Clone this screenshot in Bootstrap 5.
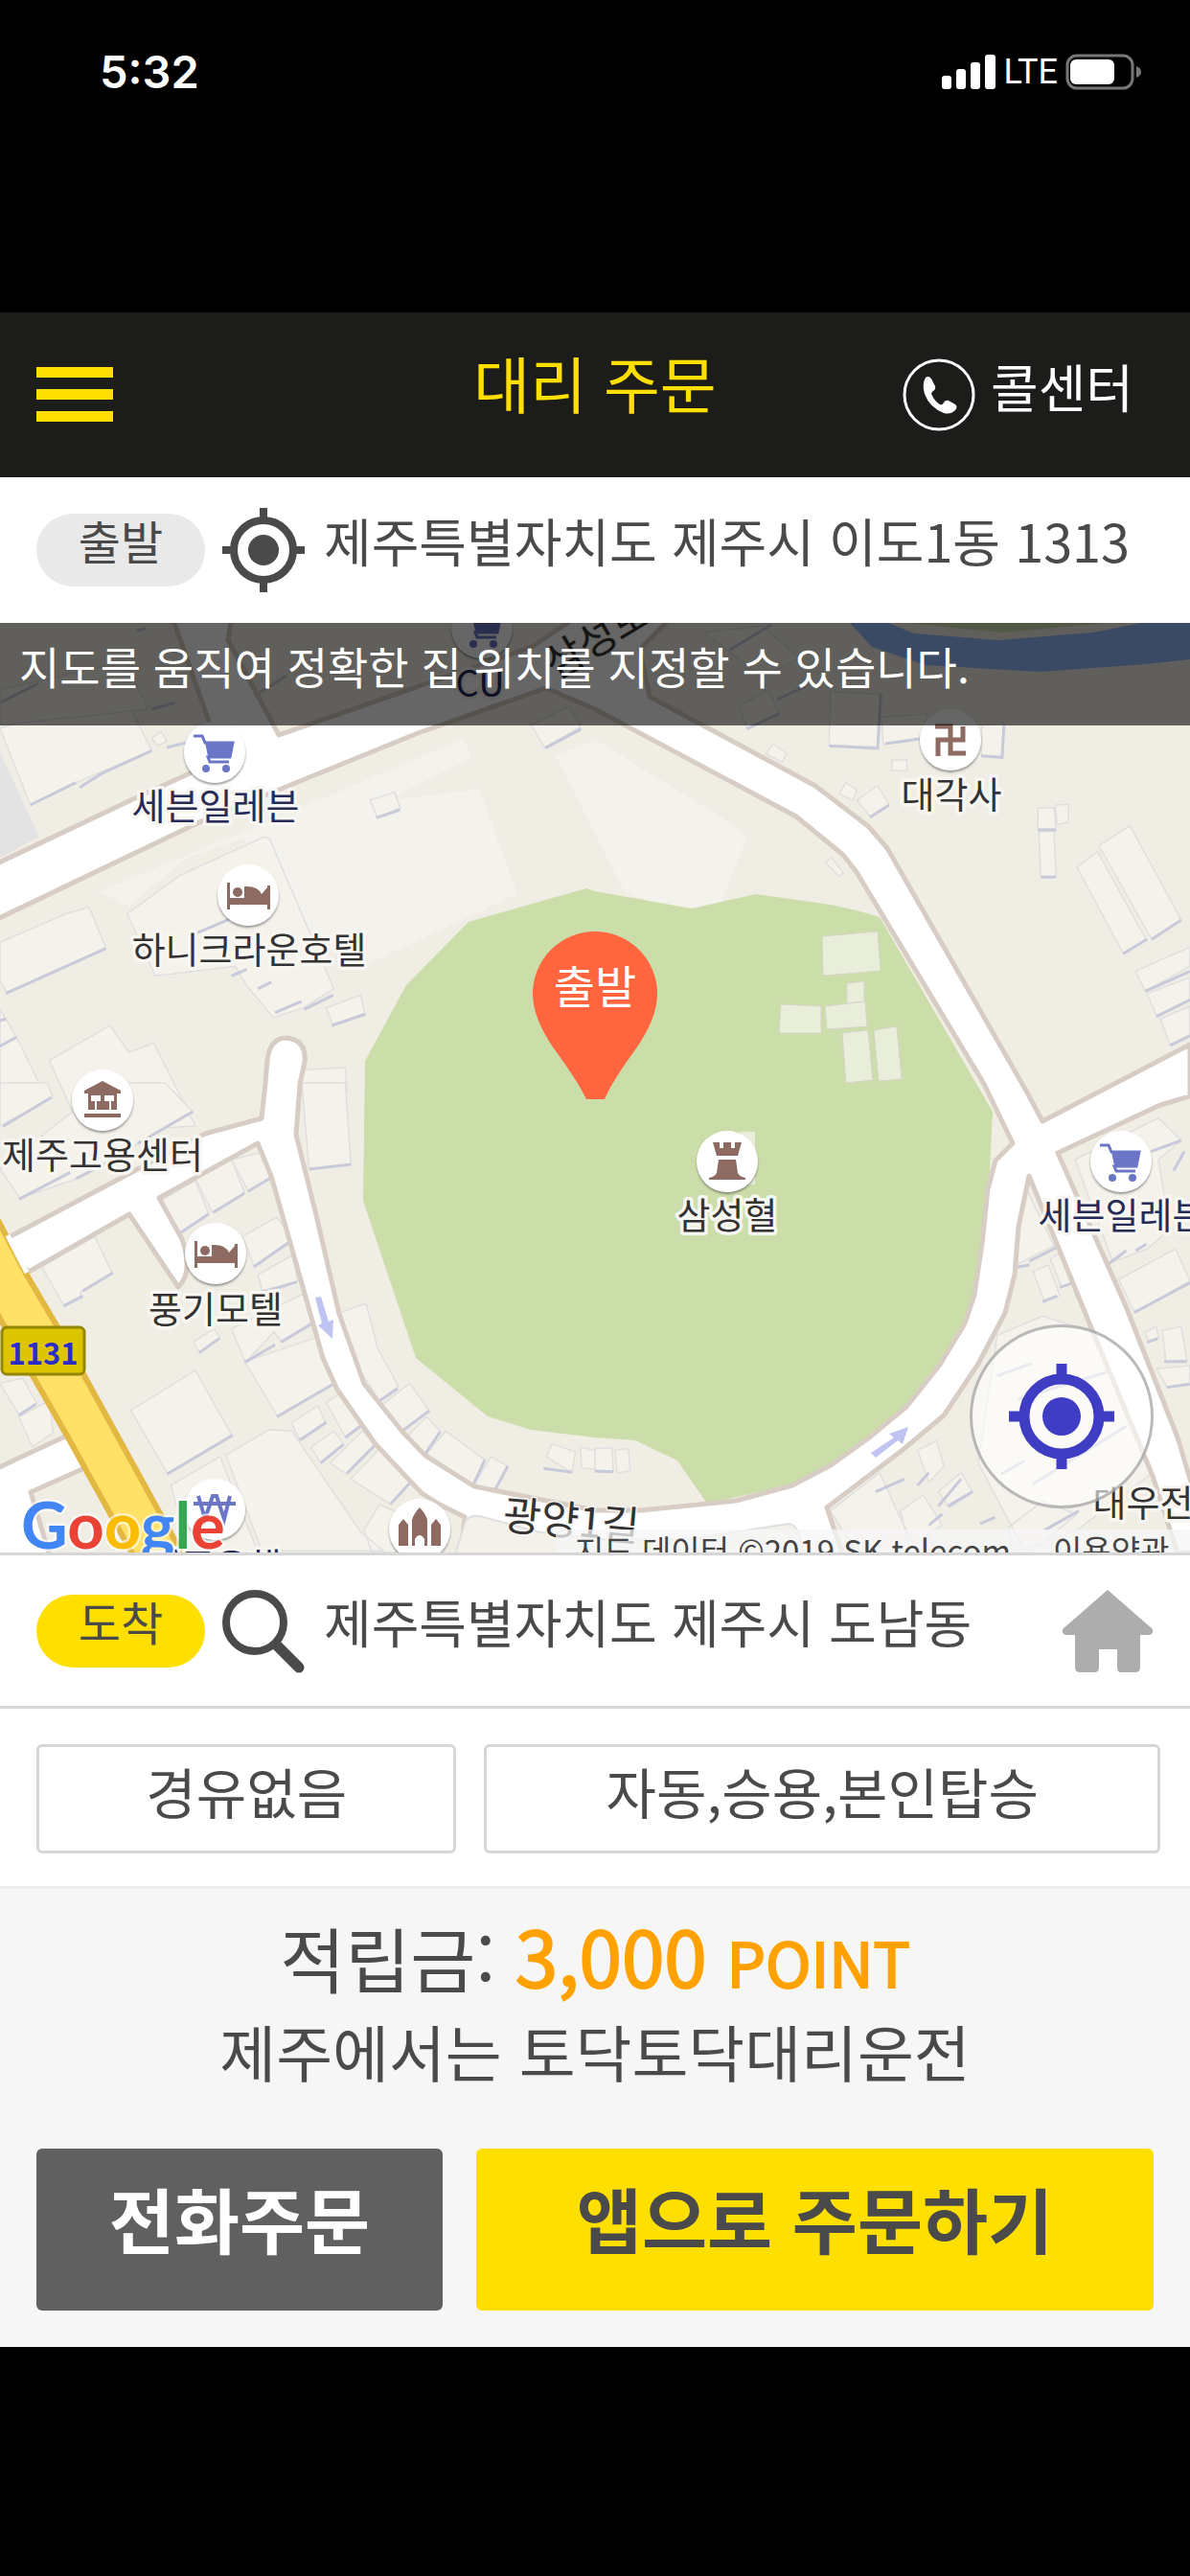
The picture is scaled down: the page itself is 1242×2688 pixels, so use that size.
<!DOCTYPE html>
<html lang="ko">
<head>
<meta charset="utf-8">
<meta name="viewport" content="width=device-width, initial-scale=1">
<title>대리 주문</title>
<link href="https://cdn.jsdelivr.net/npm/bootstrap@5.3.0/dist/css/bootstrap.min.css" rel="stylesheet">
<style>
body{background:#000;color:#4a4a4a;font-family:"Noto Sans CJK KR",sans-serif;min-height:100vh}
button{font-family:inherit}
.status-bar{height:326px;padding:45px 50px 0 104px;font-family:Inter,sans-serif}
.clock{font-size:47px;line-height:60px;font-weight:600}
.net{font-family:Roboto,sans-serif;font-size:36px;line-height:60px}
.app-head{height:172px;background:#1c1c1a;display:grid;grid-template-columns:1fr auto 1fr;align-items:center;padding:0 38px}
.app-title{font-size:64px;line-height:80px;color:#ffdf00;padding-bottom:28px;font-weight:400}
.call-link{margin-right:21px}
.call-txt{font-size:54px;line-height:72px;padding-bottom:18px}
.addr-row{height:152px;padding:0 38px}
.addr-end{height:163px;border-top:3px solid #d6d6d6;border-bottom:3px solid #d6d6d6}
.tag{width:176px;height:76px;border-radius:38px;font-size:48px;line-height:54px;background:#e9e9e9;text-align:center;margin-right:18px}
.tag-end{background:#ffdf00}
.addr{font-size:54px;line-height:72px;padding-bottom:20px;margin-left:20px;white-space:nowrap}
.map-tip{height:107px;background:rgba(0,0,0,.6);color:#fff;font-size:46px;line-height:88px;padding-left:20px;white-space:nowrap}
.locate{right:38px;bottom:46px;width:192px;height:192px;border:3px solid rgba(130,130,130,.55);background:rgba(255,255,255,.6)}
.opts{padding:37px 31px 34px 38px;gap:29px}
.opt{height:114px;border:3px solid #d6d6d6;border-radius:6px;background:#fff;color:#4a4a4a;font-size:57px;line-height:72px;padding:0 0 18px;min-width:0;white-space:nowrap}
.w-a{flex:437 1 0}.w-b{flex:707 1 0}.w-c{flex:424 1 0}
.pay{background:#f6f6f6;border-top:3px solid #ececec;padding:23px 38px 38px}
.sum{font-size:74px;line-height:96px}
.amt{font-size:80px;color:#ffa200;-webkit-text-stroke:2px #ffa200;line-height:90px}
.unit{font-size:64px;color:#ffa200;-webkit-text-stroke:2px #ffa200;line-height:90px}
.slogan{font-size:64px;line-height:96px}
.cta-row{gap:35px;margin-top:55px}
.cta{height:169px;border:0;border-radius:6px;font-size:74px;line-height:100px;font-weight:700;padding:0 0 26px;min-width:0;white-space:nowrap}
.cta-call{background:#606060;color:#fff}.cta-app{background:#ffdf00;color:#4a4a4a}
.poi{font-size:38px;fill:#333;stroke:#f8f6f1;stroke-width:7px;stroke-linejoin:round;paint-order:stroke;text-anchor:middle}
.shop{fill:#262b57}
.street{font-size:43px;text-anchor:start;stroke-width:3px}
.road{fill:#fff;stroke:#d7cdc4;stroke-width:5px;stroke-linejoin:round}
.bld path{fill:#f5f2eb;stroke:#e0dfdf;stroke-width:1.5px;vector-effect:non-scaling-stroke}
.bld .sh{fill:none;stroke:#c8c9d9;stroke-width:3px}
</style>
</head>
<body>
<div class="status-bar d-flex justify-content-between align-items-start text-white">
  <span class="clock">5:32</span>
  <div class="d-flex align-items-center gap-2">
    <svg width="57" height="36" fill="#fff"><rect y="22" width="10" height="14" rx="3"/><rect x="15" y="15" width="10" height="21" rx="3"/><rect x="30" y="8" width="10" height="28" rx="3"/><rect x="45" width="11" height="36" rx="3"/></svg>
    <span class="net">LTE</span>
    <svg width="80" height="38"><rect x="2" y="2" width="68" height="34" rx="10" fill="none" stroke="#777" stroke-width="3"/><rect x="5" y="6" width="46" height="26" rx="6" fill="#fff"/><path d="M74 13q5 2 5 6t-5 6z" fill="#777"/></svg>
  </div>
</div>

<header class="app-head text-white">
  <button class="btn p-0 border-0 text-start lh-1" aria-label="메뉴"><svg width="80" height="58" fill="#ffdf00"><rect width="80" height="11"/><rect y="23" width="80" height="11"/><rect y="46" width="80" height="11"/></svg></button>
  <h1 class="app-title m-0">대리 주문</h1>
  <a href="#call" class="call-link d-flex align-items-center justify-content-end text-white text-decoration-none">
    <svg width="76" height="76" viewBox="0 0 76 76"><circle cx="38" cy="38" r="36" fill="none" stroke="#fff" stroke-width="3"/><path d="M24 20q4-3 7 3l3 6q1 3-2 5-3 2-1 5 3 6 8 9 3 1 4-2 2-3 5-2l7 4q3 2 0 6-5 5-12 3-15-6-20-20-3-10 1-17z" fill="#fff"/></svg>
    <span class="call-txt ms-3">콜센터</span>
  </a>
</header>

<main class="bg-white">
  <section class="addr-row d-flex align-items-center">
    <span class="tag">출발</span>
    <svg width="86" height="88" viewBox="0 0 86 88"><circle cx="43" cy="44" r="31" fill="none" stroke="#4a4a4a" stroke-width="8"/><circle cx="43" cy="44" r="16" fill="#4a4a4a"/><path d="M43 0v12M43 76v12M0 44h11M75 44h11" stroke="#4a4a4a" stroke-width="8"/></svg>
    <span class="addr">제주특별자치도 제주시 이도1동 1313</span>
  </section>

  <section class="position-relative overflow-hidden">
    <svg class="d-block w-100" viewBox="0 0 1242 970" role="img" aria-label="지도">
      <defs>
        <filter id="pinShade" x="-20%" y="-20%" width="140%" height="150%"><feDropShadow dx="0" dy="2" stdDeviation="1" flood-color="#555" flood-opacity=".6"/></filter>
        <g id="disc"><circle r="32" fill="#fff" filter="url(#pinShade)"/></g>
        <g id="cart"><use href="#disc"/><path d="M-22-17h9l3 7h29l-3 15h-23l2 5h20" fill="none" stroke="#6b76c6" stroke-width="3"/><path d="M-10-10h29l-4 14h-22z" fill="#6b76c6"/><circle cx="-9" cy="17" r="4" fill="#6b76c6"/><circle cx="12" cy="17" r="4" fill="#6b76c6"/></g>
        <g id="bed" fill="#8d6b63"><use href="#disc"/><path d="M-22-13h3v16h39v-13h3v25h-3v-5h-39v5h-3z"/><circle cx="-11" cy="-3" r="5"/><path d="M-4 3v-12q14-1 18 8l6-7v11z"/></g>
      </defs>
      <rect width="1242" height="970" fill="#f0ede5"/>
      <path fill="#93b9fa" d="M887 0l23 25 56 19 119 7 112-8 45-5V0h-50l-52 10-98 8-88-7-27-11z"/>
      <path fill="#cbdda8" d="M946 0l100 10L1156 0z"/>
      <path fill="#e3e3e3" d="M0 135l41 88-41 22z"/>
      <g fill="#f4f2ec"><path d="M103 281l381-160 8 20-90 45 98-13 40 110-155 72-90-30-40-100-60 20-60 50z"/><path d="M621 122l124 76 35 24-32 82-27 5-70-30-71-141z"/></g>

      <!-- buildings, upper left quarter -->
      <g class="bld" transform="translate(0 -10) scale(.396 .3333)">
        <path d="M0 360l320-120 80 190-200 100-120 70zM400 390l25-20 15 30-25 15zM975 585l65-25 15 50-60 30zM335 940l140-120 220-120 15 5 170 470-80 60-80 30-70-100-30-60-210 30zM0 1030l175-90 60-20 45 130-260 140-20-40zM860 1235l90-40 12 60-85 35zM130 1400l160-110 50 85 65-30 110 260-300 20zM1400 350l100-60 30 65-95 65zM0 1240l45 90 70 170H0zM795 1430l115-8 5 78H795z"/>
        <path d="M0 350V240l330-90 60 150z"/>
        <path class="sh" d="M80 600l120-70M210 545l60-45 130-70M440 420l50-15M15 1190l263-140M500 1010l110-55M610 1135l40-20M725 1250l70-35M802 1240l76-45M680 1175l35-20M875 1290l88-35M992 640l62-25M1437 422l95-60M0 1275l15-5M0 1355l43-28M0 280l100-60M675 255l80-60M360 55l25-8M400 300l60-20"/>
      </g>
      <!-- upper right quarter -->
      <g class="bld" transform="translate(621 -10) scale(.396 .3333)">
        <path d="M620 245l135 8-10 165-128-5zM755 325l120-10-20 80-95 15zM380 290l75-50 30 70-85 50zM450 440l20-30 35 28-12 28zM645 565l15-35 30 22-10 33zM690 585l55-45 30 58-50 38zM782 460l40-2v35h-40zM1020 350l58-8-5 108-55-5zM1168 610l42-2 5 68h-48zM1213 600l35-2v55l-30 8zM1170 685l40-5 5 143-40 3zM608 780l15-15 32 48-13 10zM1270 795l55-48 128 275-60 45zM1328 727l82-62 135 295-78 60zM1425 1120l143-75v60l-118 78zM1455 1190l113-50v70l-88 50zM1490 1270l78-40v90l-52 32zM290 60l150-20 100 100-100 60z"/>
        <path class="sh" d="M617 415l128 8 8-170M765 408l90-15M725 638l50-38M1018 446l55 5 5-100M1167 678h48M1175 826h40M1393 1065l62-45M1468 1020l77-60M1450 1183l118-62M1480 1262l88-52M1516 1353l52-30M400 362l85-48M480 270l75-42M355 115l110-80"/>
      </g>
      <!-- lower left quarter -->
      <g class="bld" transform="translate(0 480) scale(.396 .3333)">
        <path d="M0 0h125l15 45-140 90zM320 0h115l73 90-145 100-160 110-150 60-53-90 180-170zM795 0h115l15 255-110 15zM415 375l100-70 35 105-85 70zM515 300l95-60 35 105-85 60zM610 240l90-25 25 75-70 50zM640 480l90-60 40 70-100 85zM680 600l90-60 15 80-90 50zM610 770l190-110 22 90-80 60-20-30-75 95zM110 575l140-95 45 115-80 55-5 20-40 30zM345 1025l170-125 97 205-170 120zM645 872l190-75 50 140-152 110zM0 940l60-15 38 80-48 35zM50 1045l80-50 10 100-55 45zM595 1165l115-80 60 5 50 90 130 225 60 60H690zM450 1260l130-90 100 300H500zM895 720l70-30 30 140 55 120-50 45-60-110zM1005 1010l75-70 50 85-68 65zM1070 1110l55-65 35 45-38 70zM1125 1160l50-70 103 90-33 80zM1250 1255l45-85 43 30-38 85zM768 1065l70-55 20 55-68 52zM860 1000l40-30 50 105-40 35zM820 1140l60-50 25 40-60 60zM870 1190l85-100 35 40-75 95zM925 1240l80-100 80 105-55 75zM510 810l55-40 15 30-55 45zM1440 1170l15-40 62 25-10 65zM1530 1140l38 10v60l-35-5zM960 1400l40-80 120 60-80 90h-60z"/>
        <path class="sh" d="M8 136l127-90M363 190l145-100M50 364l135-84M200 300l90-55M815 270l110-15M465 478l85-68M562 406l82-60M653 340l74-52M669 576l102-85M690 655l93-32M645 875l80-55M740 812l82-58M730 1045l153-105M440 1225l173-122M168 698l50-30M218 652l80-58M50 1040l45-35M1000 995l48-38M1062 1088l70-62M1122 1160l38-68M1245 1265l33-85M1300 1285l38-85M1030 1318l55-72M790 1118l70-55M845 1190l60-58M915 1222l75-90M910 1110l40-35M525 845l53-45M1433 1207l75 12"/>
      </g>
      <!-- lower right quarter -->
      <g class="bld" transform="translate(621 480) scale(.396 .3333)">
        <path d="M1265 240l220-130 60 70-60 60 30 220-60 60-90 40zM1380 615l150-95 38 100-145 100zM1110 350l30-10 70 170-110 65zM1155 590l40-20 30 95-40 20zM1200 550l25-15 30 90-25 15zM1450 780l30-18 5 40-25 10zM1495 775l50-12 15 105-55 5zM1480 895l88-10v60l-60 8zM1060 790l120-60 130 50 160 440-200 180-140 60-120-270zM850 1150l50-30 20 80-40 50zM905 1280l60-60 30 60-60 50zM805 1340l60-50 50 95-40 30 30 55H830zM1090 1390l90-80 90 40-120 120h-50zM0 1145l45-3 3 75H0zM53 1150l35-5 5 70-35 5zM620 1340l130-120 50 130 50 120H690z"/>
        <path class="sh" d="M1465 215l80-35M1525 275l28-60M1425 525l28-20M1350 570l50-45M1422 718l146-92M1180 685l38-18M1225 640l30-12M1145 558l75-45M1100 580l45-10M1455 812l28-12M1500 872h60M1508 953l60-10M1060 918l90-40M1115 990l235-85M1155 1255l245-180M1070 1225l60-40M740 1280l75-40M905 1325l60-85M880 1385l35-35M1015 1380l40-20M850 1260l30-40M1185 1400l90-60M0 1215l48 2M930 1325l65-45"/>
      </g>

      <path fill="#cbdda8" d="M612 277l-123 35-65 66-43 79-2 146 55 164 75 61 45 14 67 8 42 3 44 21 31 45 89-20 40-21 40-28 40-33 35-44 26-43 10-30 8-53 6-57 4-80-118-203-24-7-27-6-78-11-67 15-101-18z"/>
      <g fill="#e9eedb" stroke="#d8d3cb" stroke-width="1"><path d="M858 327l58-5 3 41-60 5z"/><path d="M884 376l18-2v21l-18 2z"/><path d="M861 400l42-5 2 26-42 3z"/><path d="M815 398l42 2v28h-44z"/><path d="M879 428l27-3 5 52-28 3z"/><path d="M912 425l24-4 5 55-24 2z"/></g>
      <path fill="#e9eedb" d="M772 531h16v55h-16z"/>

      <!-- roads -->
      <path class="road" d="M-5 252L143 182l55-25 32-20-48-137-10-8h70l-4 26 53 99 264-92 45-30h100l-27 27-5 7 10 48 173 93 55 42 20 23 146 255 16 30 154-80v54l-31 9-107 50 71 160 54 137 18 60v60h-18l-26-80-63-152-66-161-11 53-4 50-10 40-28 53-36 54-43 36-79 60 20 60H480l5-50-26-13-19-12-48-51-40-57-15-33-34-120-20-70-14-34-103 57 24 43q12 35-4 50l-51-76-105 60-32-30 121-64 95-50 59-16 4-37 2-24q3-23 20-23 21 2 19 25l-5 23-4 53 20 80 25 107 26 73 40 50 24 25 51 32 126 25 48 0 99-10 59-16 40-21 39-28 40-33 35-44 26-43 10-30 8-53 6-57 8-30 18-18-30-62L894 260l-14-18-49-40-210-112-51-22-134 47-226 92L-5 310z"/>
      <path fill="#f4f1ea" stroke="#e0dfdf" stroke-width="2" d="M474 975l12-38q6-8 18-4l60 16 76 8 80-1 103-16q12 0 16 35z"/>
      <path class="road" d="M-5 883l90-42 12 37-65 29 20 67H-5z"/>
      <path fill="#ffe168" stroke="#e3b842" stroke-width="6" d="M-8 612L26 677l33 56 136 247h-52L71 850-8 712z"/>
      <path d="M8 639l20 39" stroke="#fff" stroke-width="5"/>
      <path fill="#fff" d="M1229 858q-16 30 13 48z"/>
      <g fill="#bfc3f1"><path d="M329 704l6-1 8 26 5-2-1 20-15-14 4-2z"/><path d="M909 866l5 5 23-18 5 4 6-18-20 7 5 4z"/></g>

      <!-- route shield -->
      <rect x="2" y="735" width="86" height="49" rx="5" fill="#dcc500" stroke="#958600" stroke-width="3"/>
      <text x="45" y="774" text-anchor="middle" font-size="31" font-weight="700" fill="#2b2bc8">1131</text>

      <!-- places -->
      <use href="#cart" x="503" y="5"/><use href="#cart" x="224" y="135"/><use href="#cart" x="1170" y="562"/>
      <use href="#bed" x="259" y="284"/><use href="#bed" x="225" y="658"/>
      <g transform="translate(992 122)"><use href="#disc"/><path d="M-16-14H0V14H16M-13 17V0H13V-14" fill="none" stroke="#8d6b63" stroke-width="5"/></g>
      <g transform="translate(107 498)" fill="#8d6b63"><use href="#disc"/><path d="M-19-10L0-20 19-10v3h-38zM-15-7h30V10h-30zM-19 14h38v4h-38z"/><path d="M-12-5h10v6h-4v9h-2V1h-4zM2-5h10v6h-3v9h-2V1H2z" fill="#fff"/></g>
      <g transform="translate(759 562)" fill="#8d6b63"><use href="#disc"/><path d="M-15-20h7v6h4v-6h8v6h4v-6h7l-4 14h-22zM-9-2H9l2 14q2 4 8 5v2h-38v-2q6-1 8-5z"/></g>
      <g transform="translate(224 925)"><use href="#disc"/><path d="M-17-14l7 24 8-24h4l8 24 6-24M-22-6H22" fill="none" stroke="#6b76c6" stroke-width="4"/></g>
      <g transform="translate(438 946)" fill="#8d6b63"><use href="#disc"/><path d="M-22-5l5-6 5 6v22h-10zM12-5l5-6 5 6v22H12zM-8-10Q-6-17 0-23 6-17 8-10V17H5V10q-5-8-10 0v7h-3z"/></g>
      <text class="poi shop" x="501" y="77">CU</text>
      <text class="poi shop" x="225" y="205">세븐일레븐</text>
      <text class="poi" x="260" y="355">하니크라운호텔</text>
      <text class="poi" x="107" y="569">제주고용센터</text>
      <text class="poi" x="225" y="730">풍기모텔</text>
      <text class="poi" x="993" y="193">대각사</text>
      <text class="poi" x="759" y="632">삼성혈</text>
      <text class="poi shop" x="1171" y="632">세븐일레븐</text>
      <text class="poi" x="1193" y="932">대우전</text>
      <text class="poi shop" x="224" y="998">제주은행</text>
      <text class="poi street" transform="translate(580 60) rotate(-31)">삼성로</text>
      <text class="poi street" transform="translate(524 946) rotate(5)">광양1길</text>

      <rect x="580" y="946" width="662" height="24" fill="#f5f5f5" fill-opacity=".75"/>
      <g font-size="33" fill="#444"><text x="600" y="981">지도 데이터 ©2019 SK telecom</text><text x="1099" y="981">이용약관</text></g>
      <text x="22" y="966" font-family="Lato" font-size="67" font-weight="700" stroke="#fff" stroke-opacity=".6" stroke-width="5" paint-order="stroke"><tspan fill="#4285f4">G</tspan><tspan fill="#ea4335">o</tspan><tspan fill="#fbbc05">o</tspan><tspan fill="#4285f4">g</tspan><tspan fill="#34a853">l</tspan><tspan fill="#ea4335">e</tspan></text>

      <path fill="#ff653e" d="M612 497Q603 478 578 444 556 412 556 387a65 65 0 0 1 130 0q0 25-22 57-25 34-33 53z"/>
      <text x="621" y="397" text-anchor="middle" font-size="47" fill="#fff">출발</text>
    </svg>
    <div class="map-tip position-absolute top-0 start-0 w-100">지도를 움직여 정확한 집 위치를 지정할 수 있습니다.</div>
    <button class="locate position-absolute rounded-circle d-flex align-items-center justify-content-center p-0" aria-label="현재 위치"><svg width="110" height="110" viewBox="0 0 110 110"><circle cx="55" cy="55" r="39" fill="none" stroke="#3f3dc4" stroke-width="11"/><circle cx="55" cy="55" r="20" fill="#3f3dc4"/><path d="M55 0v13M55 97v13M0 55h13M97 55h13" stroke="#3f3dc4" stroke-width="11"/></svg></button>
  </section>

  <section class="addr-row addr-end d-flex align-items-center">
    <span class="tag tag-end">도착</span>
    <svg width="86" height="88" viewBox="0 0 86 88"><circle cx="34" cy="35" r="30" fill="none" stroke="#4a4a4a" stroke-width="8"/><path d="M57 59l23 23" stroke="#4a4a4a" stroke-width="11" stroke-linecap="round"/></svg>
    <span class="addr">제주특별자치도 제주시 도남동</span>
    <button class="btn p-0 border-0 ms-auto lh-1" aria-label="집"><svg width="96" height="88" viewBox="0 0 96 88" fill="#adadad"><path d="M48 1L95 42q1 6-5 6h-8v34q0 5-5 5H62q-4 0-4-5V63H39v19q0 5-5 5H19q-5 0-5-5V48H6q-6 0-5-6z"/></svg></button>
  </section>

  <section class="opts d-flex">
    <button class="opt w-a">경유없음</button>
    <button class="opt w-b">자동,승용,본인탑승</button>
  </section>

  <section class="pay">
    <div class="sum text-center">적립금: <span class="amt">3,000</span> <span class="unit">POINT</span></div>
    <div class="slogan text-center">제주에서는 토닥토닥대리운전</div>
    <div class="cta-row d-flex">
      <button class="cta cta-call w-c">전화주문</button>
      <button class="cta cta-app w-b">앱으로 주문하기</button>
    </div>
  </section>
</main>
<script src="https://cdn.jsdelivr.net/npm/bootstrap@5.3.0/dist/js/bootstrap.bundle.min.js"></script>
</body>
</html>
